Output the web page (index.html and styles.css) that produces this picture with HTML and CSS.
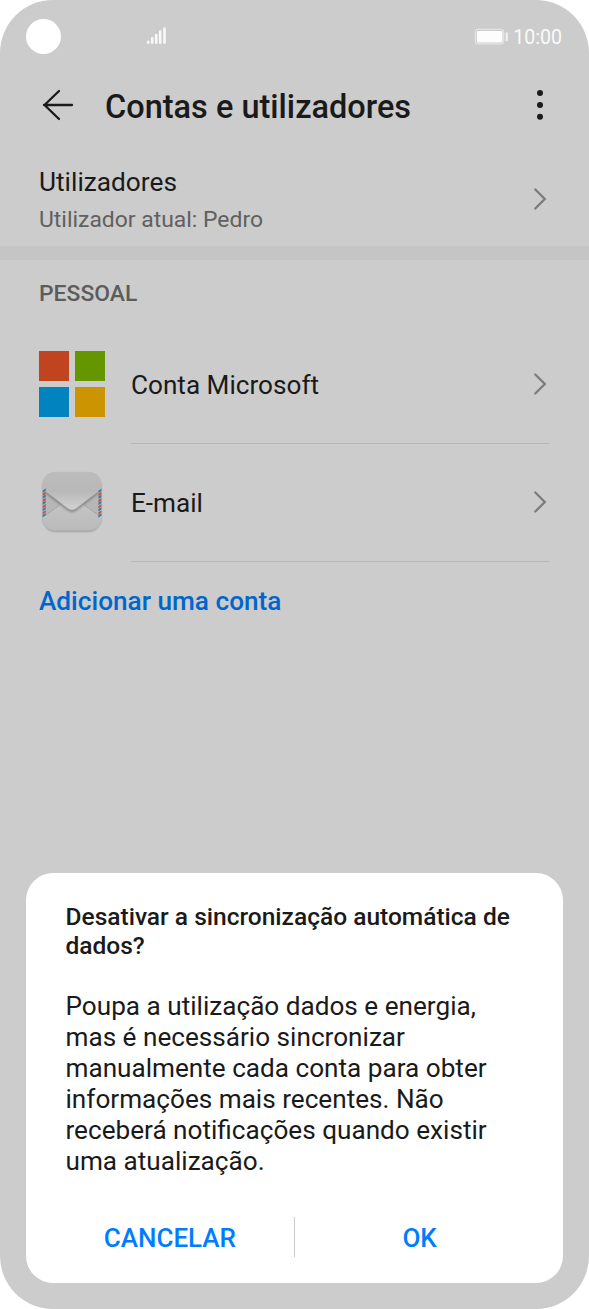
FILE: index.html
```html
<!DOCTYPE html>
<html lang="pt">
<head>
<meta charset="utf-8">
<title>Contas e utilizadores</title>
<link rel="stylesheet" href="styles.css">
</head>
<body>
<main class="phone">
  <header class="status">
    <span class="camera"></span>
    <svg class="signal" width="22" height="20" viewBox="0 0 22 20"><path d="M2.200 15.800v-1M6.200 15.800v-4.500M10.200 15.800V8M14.200 15.800V4.500M18.500 15.800V1.500" stroke="#f8f8f8" stroke-width="2.600" stroke-linecap="round" fill="none"/></svg>
    <svg class="battery" width="34" height="18" viewBox="0 0 34 18"><rect x="1.300" y="1.300" width="28.500" height="14.600" rx="2.500" fill="none" stroke="#ececec" stroke-width="1"/><rect x="2.900" y="2.900" width="25.500" height="11.600" rx=".8" fill="#fdfdfd"/><path d="M32.800 5.200v7" stroke="#f2f2f2" stroke-width="2" stroke-linecap="round"/></svg>
    <span class="time">10:00</span>
  </header>
  <div class="titlebar">
    <svg class="back" width="32" height="32" viewBox="0 0 32 32"><path d="M30 16H2M17 2L2.500 16 17 30" fill="none" stroke="#1a1a1a" stroke-width="2.300" stroke-linecap="round" stroke-linejoin="round"/></svg>
    <h1>Contas e utilizadores</h1>
    <svg class="more" width="8" height="32" viewBox="0 0 8 32" fill="#1a1a1a"><circle cx="4" cy="4" r="3"/><circle cx="4" cy="16" r="3"/><circle cx="4" cy="27.800" r="3"/></svg>
  </div>
  <section class="users">
    <div><div class="label">Utilizadores</div><div class="sub">Utilizador atual: Pedro</div></div>
    <svg class="chev" width="14" height="22" viewBox="0 0 14 22"><path d="M2.300 1.500L11.800 11l-9.500 9.500"/></svg>
  </section>
  <div class="band"></div>
  <h2>PESSOAL</h2>
  <div class="account">
    <svg class="icon" width="66" height="66" viewBox="0 0 66 66"><path fill="#c14420" d="M0 0h30v30H0z"/><path fill="#659600" d="M36 0h30v30H36z"/><path fill="#0083be" d="M0 36h30v30H0z"/><path fill="#cc9400" d="M36 36h30v30H36z"/></svg>
    <div class="row"><span class="label">Conta Microsoft</span><svg class="chev" width="14" height="22" viewBox="0 0 14 22"><path d="M2.300 1.500L11.800 11l-9.500 9.500"/></svg></div>
  </div>
  <div class="account">
    <svg class="icon" width="66" height="66" viewBox="0 0 66 66">
      <defs>
        <linearGradient id="flap" x2="0" y2="1"><stop stop-color="#bcbcbc"/><stop offset=".5" stop-color="#b8b8b8"/><stop offset="1" stop-color="#d2d2d2"/></linearGradient>
        <linearGradient id="fold" x2="0" y2="1"><stop stop-color="#c4c4c4"/><stop offset="1" stop-color="#bababa"/></linearGradient>
        <clipPath id="tile"><rect x="3.500" y="3" width="59" height="58.500" rx="13"/></clipPath>
        <filter id="soft" x="-.2" y="-.2" width="1.400" height="1.400"><feGaussianBlur stdDeviation=".9"/></filter>
        <g id="stripes">
          <path fill="#ccc" d="M0 0h3.600v28H0z"/>
          <path fill="#347fa8" d="M0 1l3.600-2v2.400L0 3.400zM0 7l3.600-2.200v2.600L0 9.600zM0 13.200L3.600 11v2.600L0 15.800zM0 19.400l3.600-2.200v2.600L0 22zM0 25.600l3.600-2.200V26L0 28.200z"/>
          <path fill="#bf5552" d="M0 4.100l3.600-2.200v2.600L0 6.700zM0 10.300l3.600-2.200v2.600L0 12.900zM0 16.500l3.600-2.200v2.600L0 19.100zM0 22.700l3.600-2.200v2.600L0 25.300z"/>
        </g>
      </defs>
      <rect x="4" y="4.500" width="58" height="58" rx="13" fill="#8c8c8c" filter="url(#soft)"/>
      <g clip-path="url(#tile)">
        <path fill="#b7b7b7" d="M3 3h60v59H3z"/>
        <path fill="url(#fold)" d="M3 49L22 35h22l19 14v13H3z"/>
        <path d="M7 46l15-11M59 46L44 35" stroke="#a2a2a2" stroke-width=".9"/>
        <path d="M7 23.500l21.500 16.500q4.500 3.500 9 0L59 23.500" fill="none" stroke="#777" stroke-width="1.800" filter="url(#soft)"/>
        <path fill="url(#flap)" d="M3 3h60v16.500L37.500 39q-4.500 3.500-9 0L3 19.500z"/>
        <use href="#stripes" x="3.200" y="20.500"/><use href="#stripes" x="59.300" y="20.500"/>
      </g>
    </svg>
    <div class="row"><span class="label">E-mail</span><svg class="chev" width="14" height="22" viewBox="0 0 14 22"><path d="M2.300 1.500L11.800 11l-9.500 9.500"/></svg></div>
  </div>
  <div class="add">Adicionar uma conta</div>
  <section class="dialog">
    <h3>Desativar a sincronização automática de<br>dados?</h3>
    <p>Poupa a utilização dados e energia,<br>mas é necessário sincronizar<br>manualmente cada conta para obter<br>informações mais recentes. Não<br>receberá notificações quando existir<br>uma atualização.</p>
    <div class="actions"><span class="btn">CANCELAR</span><span class="divider"></span><span class="btn">OK</span></div>
  </section>
</main>
</body>
</html>
```
FILE: styles.css
```css
* { box-sizing: border-box; }
body { margin: 0; background: #fff; font-family: Roboto, sans-serif; color: #1a1a1a; }
h1, h2, h3, p { margin: 0; font-weight: 500; }
.phone { width: 589px; height: 1309px; background: #ccc; border-radius: 53px; overflow: hidden; display: flex; flex-direction: column; }
.status { height: 73px; display: flex; align-items: center; padding: 0 27px 0 26px; }
.camera { width: 35px; height: 35px; border-radius: 50%; background: #fff; }
.signal { margin-left: 85px; }
.battery { margin-left: auto; }
.time { color: #fafafa; font-size: 19.6px; margin-left: 5px; padding-top: 1px; }
.titlebar { height: 63px; display: flex; align-items: center; padding: 0 45px 0 42px; }
h1 { font-size: 32.5px; line-height: 40px; margin-left: 31px; flex: 1; padding-top: 4px; }
.users { height: 110px; padding: 28px 42px 0 39px; display: flex; justify-content: space-between; }
.label { font-size: 26.15px; line-height: 36px; }
.users .label { font-size: 26.25px; line-height: 37px; }
.sub { font-size: 22.9px; line-height: 38px; color: #606060; }
.chev { fill: none; stroke: #7c7c7c; stroke-width: 2.3; stroke-linecap: round; }
.users .chev { margin-top: 24px; }
.band { height: 14px; background: #c5c5c5; }
h2 { height: 65px; line-height: 67px; padding-left: 39px; font-size: 22.9px; color: #5c5c5c; }
.account { height: 118px; display: flex; align-items: center; padding: 0 39px; gap: 26px; }
.row { flex: 1; height: 118px; border-bottom: 1px solid #b8b8b8; display: flex; align-items: center; justify-content: space-between; padding-right: 3px; position: relative; top: 1px; }
.row .label { padding-top: 1px; }
.row .chev { margin-bottom: 2px; }
.add { font-size: 26.2px; font-weight: 500; color: #0066cc; padding: 22px 39px; line-height: 36px; }
.dialog { margin: auto 26px 26px; height: 410px; background: #fff; border-radius: 27px; padding: 29px 0 0 39.5px; }
h3 { font-size: 24.53px; line-height: 29px; }
p { font-size: 26.15px; line-height: 31px; font-weight: 400; margin-top: 31px; }
.actions { display: flex; margin: 40px 39px 0 0; height: 40px; }
.btn { flex: 1; display: flex; align-items: center; justify-content: center; color: #007dff; font-size: 26px; font-weight: 500; padding-top: 2px; }
.divider { width: 1px; background: #ccc; }
.btn:first-child { padding-right: 20px; }
.btn:last-child { padding-left: 20px; }
```
